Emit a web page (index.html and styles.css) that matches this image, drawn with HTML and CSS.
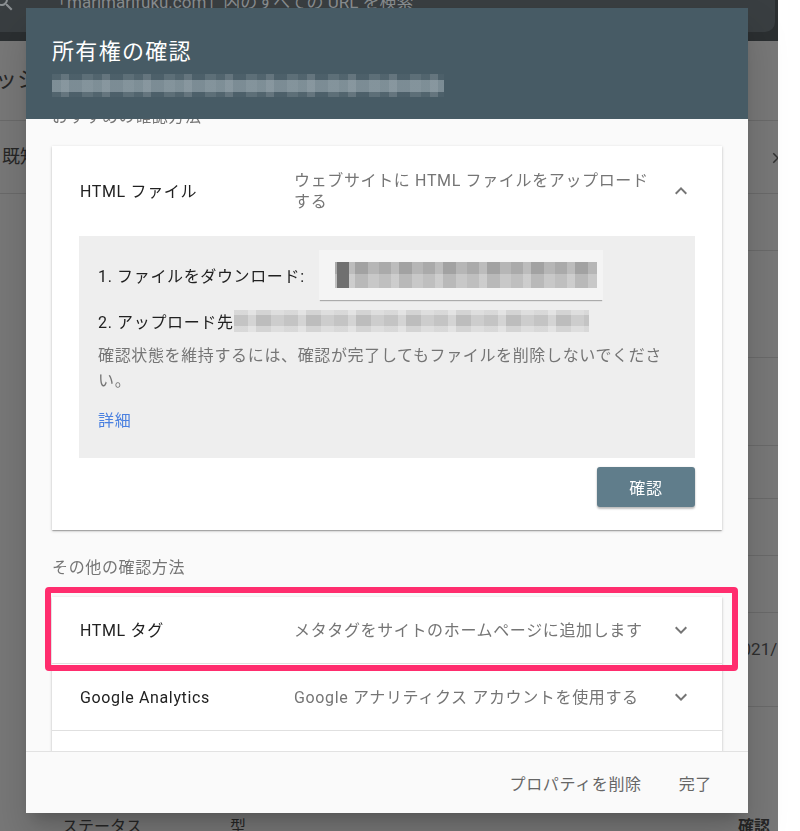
FILE: index.html
```html
<!DOCTYPE html>
<html lang="ja">
<head>
  <meta charset="UTF-8">
  <title>所有権の確認</title>
  <link rel="stylesheet" href="styles.css">
</head>
<body>

<div class="screen">
  <!-- dimmed page behind the dialog -->
  <div class="page">
    <div class="topbar">
      <div class="search">
        <svg class="search-icon" viewBox="0 0 24 24"><path d="M15.5 14h-.79l-.28-.27A6.47 6.47 0 0 0 16 9.5 6.5 6.5 0 1 0 9.5 16c1.61 0 3.09-.59 4.23-1.57l.27.28v.79l5 4.99L20.49 19l-4.99-5zm-6 0C7.01 14 5 11.99 5 9.5S7.01 5 9.5 5 14 7.01 14 9.5 11.99 14 9.5 14z"/></svg>
        <span class="search-text">「marimarifuku.com」内のすべての URL を検索</span>
      </div>
    </div>
    <div class="page-head"><h1>ダッシュボード</h1></div>
    <div class="tabs">
      <span>既知の問題</span>
      <svg class="tab-close" viewBox="0 0 24 24"><path d="M19 6.41L17.59 5 12 10.59 6.41 5 5 6.41 10.59 12 5 17.59 6.41 19 12 13.41 17.59 19 19 17.59 13.41 12z"/></svg>
    </div>
    <div class="table">
      <div class="trow r56"></div>
      <div class="trow r107"></div>
      <div class="trow r88"></div>
      <div class="trow r53"></div>
      <div class="trow r57"></div>
      <div class="trow r57"></div>
      <div class="trow r94"><span class="date">2021/11/04</span></div>
      <div class="thead">
        <span class="col-status">ステータス</span>
        <span class="col-type">型</span>
        <span class="col-check">確認</span>
      </div>
    </div>
  </div>
  <div class="gutter"></div>
</div>

<div class="dialog">
  <div class="dialog-head">
    <h2>所有権の確認</h2>
    <div class="title-mosaic"></div>
  </div>

  <div class="dialog-body">
    <div class="scroll">
      <p class="section-label">おすすめの確認方法</p>

      <div class="card">
        <div class="method-head">
          <div class="method-name">HTML ファイル</div>
          <div class="method-desc">ウェブサイトに HTML ファイルをアップロードする</div>
          <svg class="chevron" viewBox="0 0 24 24"><path d="M7.41 15.41L12 10.83l4.59 4.58L18 14l-6-6-6 6z"/></svg>
        </div>

        <div class="method-panel">
          <div class="step step-download">
            1. ファイルをダウンロード:
            <span class="file-chip"><span class="chip-mosaic"></span></span>
          </div>
          <div class="step">2. アップロード先<span class="url-mosaic"></span></div>
          <p class="note">確認状態を維持するには、確認が完了してもファイルを削除しないでください。</p>
          <a class="more" href="#">詳細</a>
        </div>

        <div class="actions">
          <button class="verify-btn">確認</button>
        </div>
      </div>

      <p class="section-label other">その他の確認方法</p>

      <div class="card list">
        <div class="method-row highlighted">
          <div class="method-name">HTML タグ</div>
          <div class="method-desc">メタタグをサイトのホームページに追加します</div>
          <svg class="chevron" viewBox="0 0 24 24"><path d="M7.41 8.59L12 13.17l4.59-4.58L18 10l-6 6-6-6 1.41-1.41z"/></svg>
          <div class="mark"></div>
        </div>
        <div class="method-row">
          <div class="method-name">Google Analytics</div>
          <div class="method-desc">Google アナリティクス アカウントを使用する</div>
          <svg class="chevron" viewBox="0 0 24 24"><path d="M7.41 8.59L12 13.17l4.59-4.58L18 10l-6 6-6-6 1.41-1.41z"/></svg>
        </div>
        <!-- next method, scrolled below the footer -->
        <div class="method-row"></div>
      </div>
    </div>
  </div>

  <div class="dialog-foot">
    <button class="text-btn">プロパティを削除</button>
    <button class="text-btn">完了</button>
  </div>
</div>

</body>
</html>
```

FILE: styles.css
```css
body {
  margin: 0;
  overflow: hidden;
  font-family: Roboto, "Noto Sans CJK JP", sans-serif;
}
.screen {
  display: flex;
  height: 831px;
}
.page {
  flex: 1;
  background-color: #787878;
  overflow: hidden;
  color: #262626;
}
.gutter {
  width: 22px;
  background-color: #fff;
}

/* page behind the scrim */
.topbar {
  height: 41px;
  background-color: #2b2f31;
}
.search {
  display: flex;
  align-items: flex-start;
  height: 32px;
  margin: 0 3px 0 -20px;
  padding-left: 20px;
  background-color: #393e41;
  border-radius: 0 0 10px 10px;
}
.search-icon {
  width: 24px;
  height: 24px;
  margin: -10px 0 0 -8px;
  fill: #8a8f92;
}
.search-text {
  margin: -8px 0 0 34px;
  font-size: 17px;
  line-height: 20px;
  color: #878c8f;
  white-space: nowrap;
}
.page-head {
  height: 79px;
  border-bottom: 1px solid #6a6a6a;
}
.page-head h1 {
  margin: 0 0 0 -27px;
  padding-top: 24px;
  font-size: 22px;
  font-weight: 400;
  line-height: 30px;
  white-space: nowrap;
}
.tabs {
  display: flex;
  justify-content: space-between;
  height: 72px;
  border-bottom: 1px solid #6a6a6a;
}
.tabs span {
  margin-left: 2px;
  padding-top: 24px;
  font-size: 18px;
  line-height: 24px;
}
.tab-close {
  width: 18px;
  height: 18px;
  margin: 28px -9px 0 0;
  fill: #333;
}
.table {
  margin-left: 35px;
}
.trow {
  border-bottom: 1px solid #6a6a6a;
  box-sizing: border-box;
}
.r56 { height: 57px; }
.r107 { height: 107px; }
.r88 { height: 88px; }
.r53 { height: 53px; }
.r57 { height: 57px; }
.r94 { height: 94px; }
.date {
  display: block;
  margin-left: 697px;
  padding-top: 24px;
  font-size: 17px;
  line-height: 24px;
  color: #2e2e2e;
  white-space: nowrap;
}
.thead {
  display: flex;
  padding: 108px 0 0 27px;
  font-size: 16px;
  line-height: 24px;
  white-space: nowrap;
}
.col-status { width: 168px; }
.col-type { width: 508px; }
.col-check { font-weight: 700; }

/* dialog */
.dialog {
  position: fixed;
  left: 26px;
  top: 8px;
  width: 722px;
  height: 805px;
  display: flex;
  flex-direction: column;
  background-color: #fafafa;
  box-shadow: 0 11px 15px -7px rgba(0,0,0,0.2), 0 24px 38px 3px rgba(0,0,0,0.14);
  letter-spacing: 0.04em;
}
.dialog-head {
  padding: 29px 26px 22px;
  background-color: #475b65;
}
.dialog-head h2 {
  margin: 0;
  font-size: 22px;
  font-weight: 400;
  line-height: 30px;
  letter-spacing: 0.06em;
  color: #fff;
}
.title-mosaic {
  width: 392px;
  height: 23px;
  margin-top: 7px;
  background:
    linear-gradient(to bottom, transparent 0 6px, rgba(170,184,191,0.5) 6px 18px, transparent 18px),
    repeating-linear-gradient(90deg, rgba(255,255,255,0.06) 0 9px, rgba(255,255,255,0.16) 9px 17px, rgba(255,255,255,0.03) 17px 30px, rgba(255,255,255,0.12) 30px 41px);
}
.dialog-body {
  flex: 1;
  overflow: hidden;
  padding: 0 26px;
}
.scroll {
  margin-top: -12px;
}
.section-label {
  margin: 0 0 19px;
  font-size: 16px;
  line-height: 20px;
  color: #757575;
}
.section-label.other {
  margin-top: 28px;
}
.card {
  background-color: #fff;
  box-shadow: 0 1px 3px rgba(0,0,0,0.2), 0 1px 1px rgba(0,0,0,0.14), 0 2px 1px -1px rgba(0,0,0,0.12);
}
.method-head,
.method-row {
  display: flex;
  align-items: center;
  padding: 0 29px 0 28px;
  font-size: 16px;
}
.method-head {
  padding-top: 24px;
  padding-bottom: 24px;
}
.method-row {
  position: relative;
  height: 67px;
  box-sizing: border-box;
  border-bottom: 1px solid #e0e0e0;
}
.method-name {
  width: 214px;
  flex-shrink: 0;
  color: #212121;
  line-height: 21px;
}
.method-desc {
  flex: 1;
  color: #757575;
  line-height: 21px;
}
.chevron {
  width: 24px;
  height: 24px;
  margin-left: 9px;
  fill: #757575;
}
.mark {
  position: absolute;
  left: -7px;
  right: -16px;
  top: -10px;
  bottom: -8px;
  border: 6px solid #ff2d6e;
  border-radius: 4px;
}
.method-panel {
  margin: 0 27px;
  padding: 14px 19px 25px;
  background-color: #eeeeee;
  font-size: 16px;
  color: #212121;
}
.step {
  display: flex;
  align-items: center;
  height: 25px;
  margin-top: 8px;
  white-space: nowrap;
}
.step-download {
  height: 50px;
  margin-top: 0;
}
.file-chip {
  display: flex;
  align-items: center;
  width: 284px;
  height: 50px;
  margin-left: 14px;
  padding: 0 6px 0 16px;
  box-sizing: border-box;
  background-color: #f4f4f4;
  box-shadow: 0 2px 1px -1px rgba(0,0,0,0.28);
}
.chip-mosaic {
  flex: 1;
  height: 26px;
  background:
    linear-gradient(90deg, transparent 0 2px, #707070 2px 14px, transparent 14px),
    linear-gradient(to bottom, transparent 0 12px, rgba(255,255,255,0.25) 12px),
    repeating-linear-gradient(90deg, #aaaaaa 0 12px, #bcbcbc 12px 20px, #a2a2a2 20px 33px, #b6b6b6 33px 44px);
}
.url-mosaic {
  width: 355px;
  height: 22px;
  background:
    linear-gradient(to bottom, rgba(255,255,255,0.35) 0 5px, transparent 5px 16px, rgba(255,255,255,0.35) 16px),
    repeating-linear-gradient(90deg, #c4c4c4 0 14px, #d4d4d4 14px 22px, #bdbdbd 22px 37px, #cdcdcd 37px 50px);
}
.note {
  margin: 10px 0 0;
  line-height: 25px;
  color: #757575;
}
.more {
  display: block;
  margin-top: 15px;
  line-height: 25px;
  color: #4a80e0;
  text-decoration: none;
}
.actions {
  display: flex;
  justify-content: flex-end;
  padding: 9px 27px 23px;
}
.verify-btn {
  width: 98px;
  height: 40px;
  border: none;
  border-radius: 3px;
  background-color: #607d8b;
  color: #fff;
  font-family: inherit;
  font-size: 16px;
  letter-spacing: 0.04em;
  box-shadow: 0 2px 2px rgba(0,0,0,0.24), 0 0 2px rgba(0,0,0,0.12);
}
.dialog-foot {
  display: flex;
  justify-content: flex-end;
  align-items: center;
  gap: 21px;
  height: 61px;
  padding: 0 28px;
  border-top: 1px solid #e2e2e2;
  background-color: #fafafa;
}
.text-btn {
  height: 36px;
  padding: 0 8px;
  border: none;
  background: none;
  font-family: inherit;
  font-size: 16px;
  letter-spacing: 0.04em;
  color: #666;
}
```
